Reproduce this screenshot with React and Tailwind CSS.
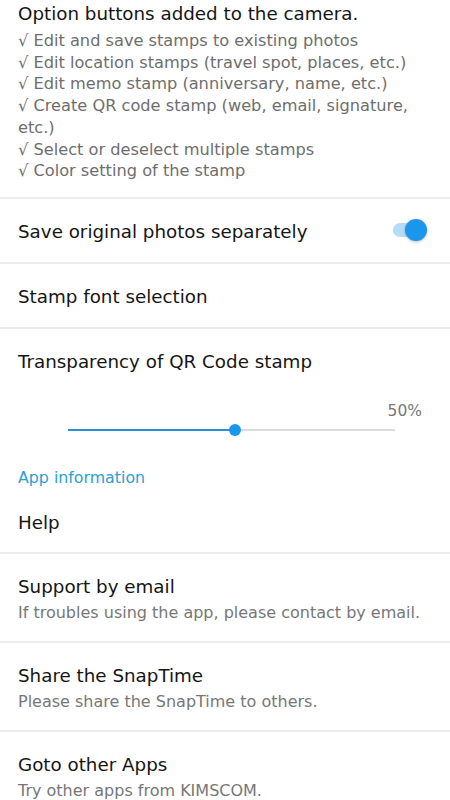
import React from 'react';

const font = { fontFamily: '"DejaVu Sans", "Open Sans", sans-serif' };

const Divider = () => <div className="h-[2px] bg-[#ececec]" />;

const Row = ({ title, right }) => (
  <div className="flex items-center justify-between px-[18px] h-[63px]">
    <div className="text-[18.3px] leading-6 pt-[3px] text-[#151515]">{title}</div>
    {right}
  </div>
);

const SubRow = ({ title, subtitle }) => (
  <div className="px-[18px] pt-[21px] pb-[18px]">
    <div className="text-[18.3px] leading-6 text-[#151515]">{title}</div>
    <div className="text-[16px] leading-5 mt-[4px] text-[#777]">{subtitle}</div>
  </div>
);

const Toggle = () => (
  <div className="relative w-[34px] h-[22px] mr-[5px] flex items-center">
    <div className="w-full h-[14px] rounded-full bg-[#b6dcf7]" />
    <div className="absolute right-0 top-0 w-[22px] h-[22px] rounded-full bg-[#1a96ea] shadow-[0_1px_3px_rgba(0,0,0,0.25)]" />
  </div>
);

const features = [
  'Edit and save stamps to existing photos',
  'Edit location stamps (travel spot, places, etc.)',
  'Edit memo stamp (anniversary, name, etc.)',
  'Create QR code stamp (web, email, signature,',
  null,
  'Select or deselect multiple stamps',
  'Color setting of the stamp',
];

export default function App() {
  return (
    <div className="w-[450px] h-[800px] overflow-hidden bg-white" style={font}>
      {/* camera options */}
      <div className="px-[18px] pb-[15px]">
        <div className="text-[18.3px] leading-[26px] pt-[1px] text-[#151515]">Option buttons added to the camera.</div>
        <div className="text-[16.2px] leading-[21.7px] mt-[3px] text-[#6e6e6e]">
          {features.map((f, i) => (
            <div key={i}>{f === null ? 'etc.)' : '\u221A ' + f}</div>
          ))}
        </div>
      </div>
      <Divider />
      <Row title="Save original photos separately" right={<Toggle />} />
      <Divider />
      <Row title="Stamp font selection" />
      <Divider />

      {/* transparency */}
      <div className="px-[18px] pt-[21px]">
        <div className="text-[18.3px] leading-6 text-[#151515]">Transparency of QR Code stamp</div>
        <div className="text-right text-[15.5px] leading-5 text-[#777] pr-[10px] mt-[27px]">50%</div>
        <div className="relative h-[12px] ml-[50px] mr-[37px] mt-[3px] flex items-center">
          <div className="w-[51%] h-[2px] bg-[#2b8ed6]" />
          <div className="flex-1 h-[2px] bg-[#dcdcdc]" />
          <div className="absolute left-[51%] -ml-[6px] top-0 w-[12px] h-[12px] rounded-full bg-[#1a96ea]" />
        </div>
      </div>

      <div className="px-[18px] pt-[32px] text-[15.8px] leading-5 text-[#2aa0d4]">App information</div>
      <div className="h-[64px] px-[18px] pt-[6px] flex items-center text-[18.3px] text-[#151515]">Help</div>
      <Divider />
      <SubRow title="Support by email" subtitle="If troubles using the app, please contact by email." />
      <Divider />
      <SubRow title="Share the SnapTime" subtitle="Please share the SnapTime to others." />
      <Divider />
      <SubRow title="Goto other Apps" subtitle="Try other apps from KIMSCOM." />
    </div>
  );
}
